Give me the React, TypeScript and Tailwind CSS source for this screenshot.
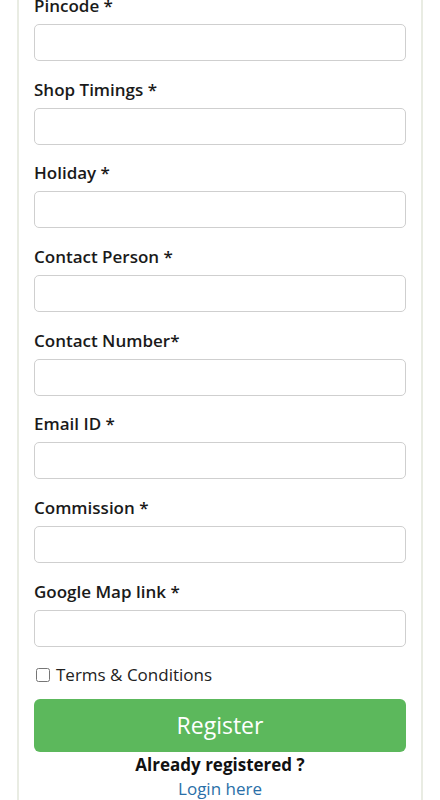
import React from "react";

const fields = [
  "Pincode *",
  "Shop Timings *",
  "Holiday *",
  "Contact Person *",
  "Contact Number*",
  "Email ID *",
  "Commission *",
  "Google Map link *",
];

function Field({ label }: { label: string }) {
  return (
    <div className="mb-[17.7px]">
      <label className="mb-[7px] block text-[17px] font-semibold leading-[22px] text-[#1a1a1a]">
        {label}
      </label>
      <input
        type="text"
        className="block h-[37px] w-full rounded-[5px] border border-[#cfcfcf] bg-white px-3 outline-none"
      />
    </div>
  );
}

export default function App() {
  return (
    <div className="h-[800px] overflow-hidden bg-white font-['Open_Sans','Noto_Sans',sans-serif]">
      <div className="mx-[17px] -mt-[5px] border-x-2 border-[#e9ece3] px-[15px] pb-8">
        {fields.map((f) => (
          <Field key={f} label={f} />
        ))}

        <label className="-mt-[2px] flex items-center gap-[6px] text-[17px] leading-[24px] text-[#222]">
          <input type="checkbox" className="ml-[2px] h-[14px] w-[14px] rounded-[2px] border border-[#8a8a8a] accent-gray-500" />
          Terms &amp; Conditions
        </label>

        <button className="mt-[12px] block h-[53px] w-full rounded-[6px] bg-[#5cb85c] text-[23px] text-white">
          Register
        </button>

        <div className="mt-[1px] text-center">
          <p className="text-[17px] font-bold leading-[24px] text-[#111]">Already registered ?</p>
          <a href="#" className="text-[17px] leading-[24px] text-[#2a6fa8]">
            Login here
          </a>
        </div>
      </div>
    </div>
  );
}
